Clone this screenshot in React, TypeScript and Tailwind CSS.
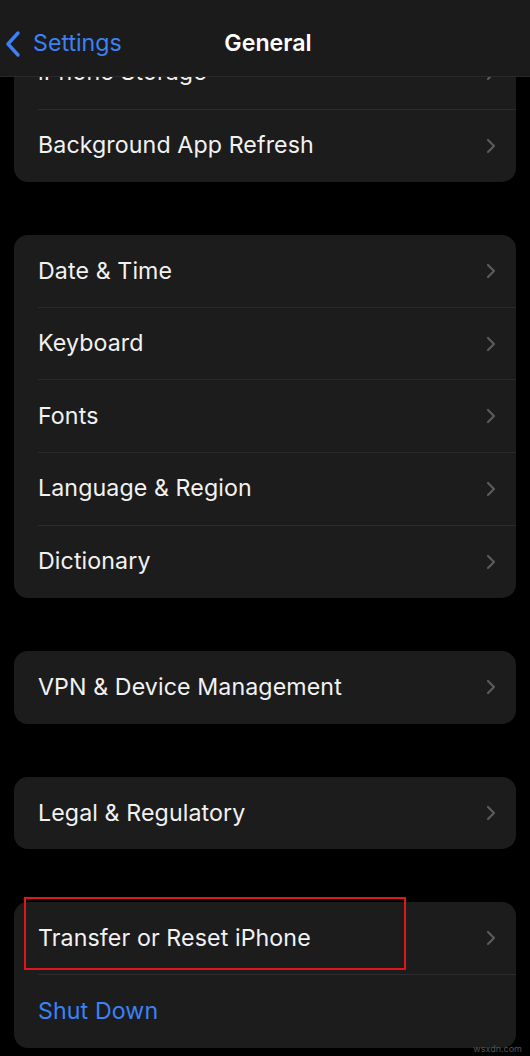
const Chevron = () => (
  <svg width="12" height="18" viewBox="0 0 12 18" fill="none" className="shrink-0">
    <path d="M3 3l6 6-6 6" stroke="#5b5b5f" strokeWidth="2.2" strokeLinecap="round" strokeLinejoin="round" />
  </svg>
);

type RowProps = { label: string; last?: boolean; blue?: boolean; chevron?: boolean };

function Row({ label, last, blue, chevron = true }: RowProps) {
  return (
    <div className="h-[72.6px] pl-6 flex">
      <div className={`flex-1 flex items-center pr-[19px] ${last ? "" : "border-b border-[#2c2c2e]"}`}>
        <span className={`flex-1 text-[23.2px] tracking-[0.1px] ${blue ? "text-[#3b82f6]" : "text-[#f2f2f2]"}`}>{label}</span>
        {chevron && <Chevron />}
      </div>
    </div>
  );
}

function Card({ children }: { children: React.ReactNode }) {
  return <div className="mx-[14px] bg-[#1c1c1d] rounded-[14px] overflow-hidden">{children}</div>;
}

export default function App() {
  return (
    <div className="relative w-[530px] h-[1056px] bg-black overflow-hidden" style={{ fontFamily: "Inter, 'Noto Sans', sans-serif" }}>
      {/* nav bar over the list */}
      <div className="absolute top-0 left-0 right-0 h-[77px] z-10 bg-[#1b1b1b] border-b border-[#2a2a2a] flex items-end pb-[15px]">
        <div className="flex items-center pl-[4px] text-[#3b82f6]">
          <svg width="18" height="28" viewBox="0 0 18 28" fill="none">
            <path d="M14 3L4 14l10 11" stroke="#3b82f6" strokeWidth="3.4" strokeLinecap="round" strokeLinejoin="round" />
          </svg>
          <span className="ml-[11px] text-[23.2px]">Settings</span>
        </div>
        <div className="absolute left-0 right-0 bottom-[15px] text-center text-[23.2px] font-semibold text-white pl-[6px]">General</div>
      </div>

      <div className="pt-[37px] flex flex-col gap-[53px]">
        <Card>
          <Row label="iPhone Storage" />
          <Row label="Background App Refresh" last />
        </Card>
        <Card>
          <Row label="Date & Time" />
          <Row label="Keyboard" />
          <Row label="Fonts" />
          <Row label="Language & Region" />
          <Row label="Dictionary" last />
        </Card>
        <Card>
          <Row label="VPN & Device Management" last />
        </Card>
        <Card>
          <Row label="Legal & Regulatory" last />
        </Card>
        <div className="relative">
          <Card>
            <Row label="Transfer or Reset iPhone" />
            <Row label="Shut Down" last blue chevron={false} />
          </Card>
          {/* red highlight box */}
          <div className="absolute left-[24px] top-[-5px] w-[382px] h-[73px] border-2 border-[#e0161b]" />
        </div>
      </div>
      <div className="absolute right-[8px] bottom-[1px] text-[9px] text-[#555]">wsxdn.com</div>
    </div>
  );
}
